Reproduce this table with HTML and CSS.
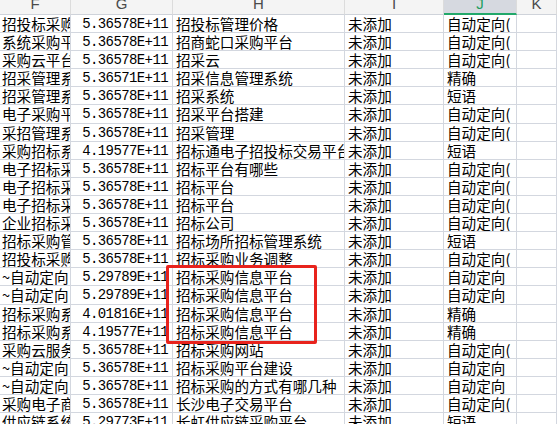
FILE: index.html
```html
<!DOCTYPE html>
<html lang="zh-CN">
<head>
<meta charset="utf-8">
<title>Sheet</title>
<link rel="stylesheet" href="styles.css">
</head>
<body>
<div class="sheet">
  <div class="hd">F</div><div class="hd">G</div><div class="hd">H</div><div class="hd">I</div><div class="hd sel">J</div><div class="hd">K</div>

  <div class="c">招投标采购</div><div class="c n">5.36578E+11</div><div class="c">招投标管理价格</div><div class="c">未添加</div><div class="c">自动定向(</div><div class="c"></div>
  <div class="c">系统采购平台</div><div class="c n">5.36578E+11</div><div class="c">招商蛇口采购平台</div><div class="c">未添加</div><div class="c">自动定向(</div><div class="c"></div>
  <div class="c">采购云平台</div><div class="c n">5.36578E+11</div><div class="c">招采云</div><div class="c">未添加</div><div class="c">自动定向(</div><div class="c"></div>
  <div class="c">招采管理系统</div><div class="c n">5.36571E+11</div><div class="c">招采信息管理系统</div><div class="c">未添加</div><div class="c">精确</div><div class="c"></div>
  <div class="c">招采管理系统</div><div class="c n">5.36578E+11</div><div class="c">招采系统</div><div class="c">未添加</div><div class="c">短语</div><div class="c"></div>
  <div class="c">电子采购平台</div><div class="c n">5.36578E+11</div><div class="c">招采平台搭建</div><div class="c">未添加</div><div class="c">自动定向(</div><div class="c"></div>
  <div class="c">采招管理系统</div><div class="c n">5.36578E+11</div><div class="c">招采管理</div><div class="c">未添加</div><div class="c">自动定向(</div><div class="c"></div>
  <div class="c">采购招标系统</div><div class="c n">4.19577E+11</div><div class="c">招标通电子招投标交易平台</div><div class="c">未添加</div><div class="c">短语</div><div class="c"></div>
  <div class="c">电子招标采购</div><div class="c n">5.36578E+11</div><div class="c">招标平台有哪些</div><div class="c">未添加</div><div class="c">自动定向(</div><div class="c"></div>
  <div class="c">电子招标采购</div><div class="c n">5.36578E+11</div><div class="c">招标平台</div><div class="c">未添加</div><div class="c">自动定向(</div><div class="c"></div>
  <div class="c">电子招标采购</div><div class="c n">5.36578E+11</div><div class="c">招标平台</div><div class="c">未添加</div><div class="c">自动定向(</div><div class="c"></div>
  <div class="c">企业招标采购</div><div class="c n">5.36578E+11</div><div class="c">招标公司</div><div class="c">未添加</div><div class="c">自动定向(</div><div class="c"></div>
  <div class="c">招标采购管理</div><div class="c n">5.36578E+11</div><div class="c">招标场所招标管理系统</div><div class="c">未添加</div><div class="c">短语</div><div class="c"></div>
  <div class="c">招投标采购</div><div class="c n">5.36578E+11</div><div class="c">招标采购业务调整</div><div class="c">未添加</div><div class="c">自动定向(</div><div class="c"></div>
  <div class="c">~自动定向</div><div class="c n">5.29789E+11</div><div class="c">招标采购信息平台</div><div class="c">未添加</div><div class="c">自动定向</div><div class="c"></div>
  <div class="c">~自动定向</div><div class="c n">5.29789E+11</div><div class="c">招标采购信息平台</div><div class="c">未添加</div><div class="c">自动定向</div><div class="c"></div>
  <div class="c">招标采购系统</div><div class="c n">4.01816E+11</div><div class="c">招标采购信息平台</div><div class="c">未添加</div><div class="c">精确</div><div class="c"></div>
  <div class="c">招标采购系统</div><div class="c n">4.19577E+11</div><div class="c">招标采购信息平台</div><div class="c">未添加</div><div class="c">精确</div><div class="c"></div>
  <div class="c">采购云服务</div><div class="c n">5.36578E+11</div><div class="c">招标采购网站</div><div class="c">未添加</div><div class="c">自动定向(</div><div class="c"></div>
  <div class="c">~自动定向</div><div class="c n">5.36578E+11</div><div class="c">招标采购平台建设</div><div class="c">未添加</div><div class="c">自动定向</div><div class="c"></div>
  <div class="c">~自动定向</div><div class="c n">5.36578E+11</div><div class="c">招标采购的方式有哪几种</div><div class="c">未添加</div><div class="c">自动定向</div><div class="c"></div>
  <div class="c">采购电子商务</div><div class="c n">5.36578E+11</div><div class="c">长沙电子交易平台</div><div class="c">未添加</div><div class="c">自动定向(</div><div class="c"></div>
  <div class="c">供应链系统</div><div class="c n">5.29773E+11</div><div class="c">长虹供应链采购平台</div><div class="c">未添加</div><div class="c">短语</div><div class="c"></div>

  <div class="mark"></div>
</div>
</body>
</html>
```

FILE: styles.css
```css
html, body {
  margin: 0;
  padding: 0;
  background: #ffffff;
  overflow: hidden;
}

.sheet {
  position: relative;
  width: 557px;
  height: 424px;
  overflow: hidden;
  display: grid;
  grid-template-columns: 71px 102px 172px 99px 73px 1fr;
  grid-template-rows: 15px repeat(23, 18.1px);
  font-family: "Noto Sans CJK SC", "Noto Sans", sans-serif;
}

.hd {
  background: #f4f4f4;
  border-right: 1px solid #dcdcdc;
  border-bottom: 1px solid #cfd3da;
  font-family: "Liberation Sans", Arial, sans-serif;
  font-size: 15px;
  line-height: 8px;
  color: #4a4a4a;
  text-align: center;
  overflow: hidden;
}

.hd.sel {
  background: #d6d9e0;
  color: #1e9e5e;
  border-bottom: 2px solid #22a86a;
}

.c {
  border-right: 1px solid #d3d7df;
  border-bottom: 1px solid #d3d7df;
  font-size: 14.6px;
  line-height: 17px;
  color: #000000;
  padding-left: 2px;
  white-space: nowrap;
  overflow: hidden;
}

.c:nth-child(6n+3),
.c:nth-child(6n+4),
.c:nth-child(6n+5) {
  padding-left: 3px;
}

.c.n {
  font-family: "Liberation Mono", "DejaVu Sans Mono", monospace;
  font-size: 14px;
  letter-spacing: -0.6px;
  line-height: 18px;
  text-align: right;
  padding-right: 4px;
  padding-left: 0;
}

.mark {
  position: absolute;
  left: 166px;
  top: 265px;
  width: 145px;
  height: 73px;
  border: 3px solid #e8231d;
  border-radius: 2px;
}
```
